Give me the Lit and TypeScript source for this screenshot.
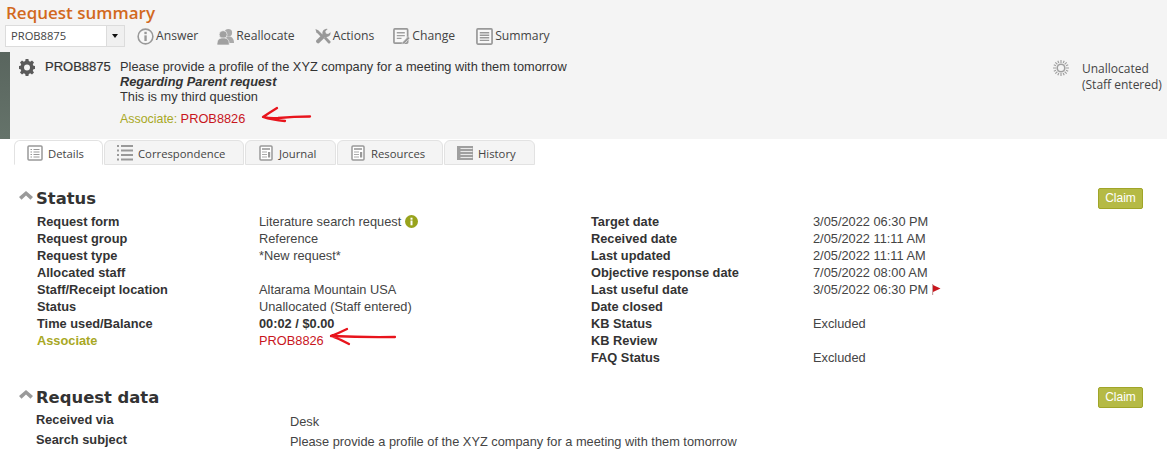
import { LitElement, html, css, svg } from "lit";
import { customElement } from "lit/decorators.js";

const ic = (body: unknown, w = 17, h = 17, vb = "0 0 18 18") =>
  html`<svg class="ic" width=${w} height=${h} viewBox=${vb}>${body}</svg>`;

const infoIcon = ic(svg`<circle cx="9" cy="9" r="7.800" fill="#f8f8f8" stroke="#999" stroke-width="1.700"/><rect x="7.800" y="7.800" width="2.500" height="6" fill="#999"/><rect x="7.800" y="4" width="2.500" height="2.500" fill="#999"/>`);
const peopleIcon = ic(svg`<circle cx="12" cy="5" r="4" fill="#aaa"/><path d="M8 16c0-5 1.500-7 4.500-7S18 11 18 16z" fill="#aaa"/><circle cx="6.500" cy="7" r="4.200" fill="#a0a0a0" stroke="#f4f4f4" stroke-width=".7"/><path d="M0 18c0-5.500 2-7.500 6.500-7.500S13 12.500 13 18z" fill="#a0a0a0" stroke="#f4f4f4" stroke-width=".7"/>`);
const wrenchIcon = ic(svg`<path d="M1.500 1l3 1.500 5 5-2 2-5-5z" fill="#999"/><path d="M17.500 4.500a4.500 4.500 0 0 1-5.500 5L5.500 16c-1.300 1.500-4.500-1.300-3-3L9 6.500A4.500 4.500 0 0 1 14.500 1L12 3.500l.6 2.300 2.300.6z" fill="#999"/><path d="M10.500 11l2-2 4.800 5c1 1.200-1 3.200-2.200 2.200z" fill="#999"/>`);
const changeIcon = ic(svg`<rect x="1" y="1" width="14.500" height="15" rx="1" fill="#f8f8f8" stroke="#999" stroke-width="1.800"/><path d="M4 5h8.500M4 8h8.500M4 11h5" stroke="#a0a0a0" stroke-width="1.400"/><path d="M10 15l6-6 1.800 1.800-6 6-2.400.5z" fill="#999" stroke="#f4f4f4" stroke-width=".5"/>`);
const summaryIcon = ic(svg`<rect x="1" y="1" width="16" height="16" rx="1" fill="#f8f8f8" stroke="#999" stroke-width="1.800"/><path d="M4 5h10M4 7.700h10M4 10.400h10M4 13.100h10" stroke="#999" stroke-width="1.500"/>`);
const detailsIcon = ic(svg`<rect x="1" y="1" width="14" height="14" rx="1" fill="#fff" stroke="#999" stroke-width="1.500"/><path d="M3.500 4.500h1.500M3.500 7h1.500M3.500 9.500h1.500M3.500 12h1.500M6.500 4.500h6M6.500 7h6M6.500 9.500h6M6.500 12h6" stroke="#999" stroke-width="1.200"/>`, 16, 16, "0 0 16 16");
const listIcon = ic(svg`<path d="M0 2h2M0 6.500h2M0 11h2M0 15.500h2M4 2h12M4 6.500h12M4 11h12M4 15.500h12" stroke="#999" stroke-width="1.800"/>`, 16, 17, "0 0 16 17");
const journalIcon = ic(svg`<rect x="1" y="1" width="12" height="14" rx="1" fill="#fff" stroke="#999" stroke-width="1.500"/><path d="M3 4h8" stroke="#999" stroke-width="1.600"/><path d="M3 7h5M3 9.500h5M3 12h5" stroke="#aaa" stroke-width="1.100"/><rect x="9" y="7" width="2.200" height="5.500" fill="#999"/>`, 14, 16, "0 0 14 16");
const historyIcon = ic(svg`<rect x="0" y="1" width="16" height="14" fill="#9f9f9f"/><path d="M3.500 3.500h12M3.500 6.500h12M3.500 9.500h12M3.500 12.500h12" stroke="#e8e8e8" stroke-width="1"/>`, 16, 16, "0 0 16 16");
const gearIcon = ic(svg`<path fill="#5a5a5a" fill-rule="evenodd" d="M6.600 0h2.800l.4 2.100 1.400.6L13 1.500l2 2-1.200 1.800.6 1.400 2.100.4v2.800l-2.100.4-.6 1.400 1.200 1.800-2 2-1.800-1.200-1.400.6-.4 2.100H6.600l-.4-2.100-1.400-.6L3 15.500l-2-2 1.200-1.800-.6-1.400L-.500 9.900V7.100l2.100-.4.6-1.400L1 3.500l2-2 1.800 1.200 1.400-.6zM8 5.500a3 3 0 1 0 0 6 3 3 0 0 0 0-6z"/>`, 16, 17, "0 0 16 17");
const sunIcon = ic(svg`<circle cx="8" cy="8" r="3.800" fill="none" stroke="#a0a0a0" stroke-width="1.600"/><path d="M8 0v3M8 13v3M0 8h3M13 8h3M2.300 2.300l2.100 2.100M11.600 11.600l2.100 2.100M2.300 13.700l2.100-2.100M11.600 4.400l2.100-2.100M4.800 .8l1 2.200M10.200 13l1 2.200M.8 11.200l2.200-1M13 5.800l2.200-1M.8 4.800l2.200 1M13 10.200l2.200 1M4.800 15.200l1-2.200M10.200 3l1-2.200" stroke="#a0a0a0" stroke-width="1.200"/>`, 16, 16, "0 0 16 16");
const chevron = html`<svg class="chev" width="14" height="9" viewBox="0 0 14 9"><path d="M0 6L7 0l7 6-2.500 2.800L7 4.500 2.500 8.800z" fill="#9a9a9a"/></svg>`;
const infoGreen = html`<svg class="ig" width="13" height="13" viewBox="0 0 13 13"><circle cx="6.500" cy="6.500" r="6.500" fill="#98a31c"/><rect x="5.500" y="5.500" width="2" height="4.800" fill="#fff"/><rect x="5.500" y="2.700" width="2" height="2" fill="#fff"/></svg>`;
const flag = html`<svg class="flag" width="9" height="11" viewBox="0 0 9 11"><rect x="0" y="0" width="1.200" height="11" fill="#c9a0a0"/><path d="M1 1l7.500 3.500L1 8z" fill="#c8161d"/></svg>`;
const arrow1 = html`<svg class="arrow1" width="52" height="20" viewBox="0 0 52 20"><path d="M17 3Q9 8 3 12q9 3 22 4M4 12q5 1.500 14 1 16-1.500 32-1.500" fill="none" stroke="#e8141c" stroke-width="2.300" stroke-linecap="round" stroke-linejoin="round"/></svg>`;
const arrow2 = html`<svg class="arrow2" width="68" height="20" viewBox="0 0 68 20"><path d="M18 2Q10 6 2 9q9 3 18 8M2 9q32 1.500 64 1" fill="none" stroke="#e8141c" stroke-width="2.300" stroke-linecap="round" stroke-linejoin="round"/></svg>`;

@customElement("app-root")
export class AppRoot extends LitElement {
  static styles = css`
    :host { display: block; width: 1167px; height: 453px; overflow: hidden; background: #fff; font: 12.800px/17px "Liberation Sans", Arial, sans-serif; color: #333; position: relative; }
    .ic { display: block; flex: none; }
    .head { background: #f4f4f4; height: 139px; display: flex; flex-direction: column; }
    h1 { margin: 0; padding: 1px 0 0 6px; height: 23px; font: 600 17px/23px "Open Sans", sans-serif; color: #d2691e; }
    .tools { display: flex; align-items: center; height: 24px; padding: 0 0 0 5px; }
    .select { box-sizing: border-box; width: 120px; height: 22px; display: flex; border: 1px solid #dcdcdc; background: #fff; margin-right: 12px; }
    .select .v { flex: 1; padding-left: 5px; font: 11.200px/20px "Open Sans", sans-serif; color: #444; display: block; }
    .select .b { width: 17px; background: #f0f0f0; border-left: 1px solid #dcdcdc; position: relative; }
    .select .b::after { content: ""; position: absolute; left: 5px; top: 8px; border: 3.500px solid transparent; border-top: 4px solid #111; border-bottom: 0; }
    .tool { display: flex; align-items: center; gap: 2px; margin-right: 19px; font: 12.200px/18px "Open Sans", sans-serif; color: #444; white-space: nowrap; }
    .tool.c { margin-right: 21px; }
    .sum { flex: 1; display: flex; margin-top: 4px; background: #f4f4f4; min-height: 0; }
    .bar { width: 10px; background: linear-gradient(#59655e, #65736a); flex: none; }
    .gear { margin: 7px 0 0 9px; }
    .id { margin: 6px 0 0 10px; width: 75px; font-size: 13px; color: #333; -webkit-text-stroke: .2px #333; flex: none; line-height: 17px; }
    .msg { padding-top: 7px; line-height: 15px; flex: 1; color: #333; position: relative; }
    .msg b { font-style: italic; display: block; }
    .msg .assoc { margin-top: 7px; color: #a8a824; line-height: 15px; font-size: 12.400px; }
    .red { color: #c8161d; font-size: 12.800px; }
    .arrow1 { position: absolute; left: 140px; top: 53px; }
    .state { display: flex; width: 114px; flex: none; padding-top: 8px; }
    .state .t { margin-left: 13px; font: 12px/16px "Open Sans", sans-serif; color: #444; white-space: nowrap; padding-top: 1px; }
    .tabs { display: flex; padding: 0 0 0 14px; margin-top: 1px; height: 25px; background: #fff; gap: 0; }
    .tab { box-sizing: border-box; height: 25px; display: flex; align-items: center; gap: 5px; padding: 2px 0 0 12px; margin-right: 1px; border: 1px solid #e2e2e2; border-radius: 6px 6px 0 0; background: #f4f4f4; font: 11.300px/18px "Open Sans", sans-serif; color: #444; }
    .tab.j { padding-left: 13px; gap: 6px; }
    .tab.on { background: #fff; border-bottom-color: #fff; }
    .tab .ic { margin-top: -2px; }
    .st { padding: 0 0 0 19px; }
    .sh { display: flex; align-items: flex-start; height: 20px; }
    .chev { margin: 2px 3px 0 0; flex: none; }
    h2 { margin: 0; font: bold 16.400px/20px "DejaVu Sans", Verdana, sans-serif; color: #333; }
    .claim { box-sizing: border-box; margin: -1px 24px 0 auto; width: 45px; height: 21px; padding: 0; border: 1px solid #a0a528; border-radius: 2px; background: #b5ba45; color: #fff; font: 12px/19px "Liberation Sans", Arial, sans-serif; text-align: center; }
    .cols { display: grid; grid-template-columns: 222px 332px 222px 1fr; padding: 4px 0 0 37px; }
    .l { font-weight: bold; color: #333; line-height: 17px; height: 17px; white-space: nowrap; }
    .v { line-height: 17px; height: 17px; white-space: nowrap; display: flex; align-items: center; gap: 4px; color: #444; position: relative; }
    .v b { color: #333; }
    .l.ol { color: #a8a824; }
    .arrow2 { position: absolute; left: 70px; top: -5px; }
    .s2 { margin-top: 22px; }
    .s1 { margin-top: 24px; }
    .dl { display: grid; grid-template-columns: 254px 1fr; padding: 2px 0 0 36px; }
    .dl .l, .dl .v { height: 20px; line-height: 20px; }
    .dl .v { top: 2px; }
  `;

  render() {
    const rows: [string, unknown, string, unknown][] = [
      ["Request form", html`Literature search request ${infoGreen}`, "Target date", "3/05/2022 06:30 PM"],
      ["Request group", "Reference", "Received date", "2/05/2022 11:11 AM"],
      ["Request type", "*New request*", "Last updated", "2/05/2022 11:11 AM"],
      ["Allocated staff", "", "Objective response date", "7/05/2022 08:00 AM"],
      ["Staff/Receipt location", "Altarama Mountain USA", "Last useful date", html`3/05/2022 06:30 PM ${flag}`],
      ["Status", "Unallocated (Staff entered)", "Date closed", ""],
      ["Time used/Balance", html`<b>00:02 / $0.00</b>`, "KB Status", "Excluded"],
      ["Associate", html`<span class="red">PROB8826</span>${arrow2}`, "KB Review", ""],
      ["", "", "FAQ Status", "Excluded"],
    ];
    return html`
      <div class="head">
        <h1>Request summary</h1>
        <div class="tools">
          <div class="select"><span class="v">PROB8875</span><span class="b"></span></div>
          <div class="tool">${infoIcon}Answer</div>
          <div class="tool">${peopleIcon}Reallocate</div>
          <div class="tool">${wrenchIcon}Actions</div>
          <div class="tool c">${changeIcon}Change</div>
          <div class="tool">${summaryIcon}Summary</div>
        </div>
        <div class="sum">
          <div class="bar"></div>
          <div class="gear">${gearIcon}</div>
          <div class="id">PROB8875</div>
          <div class="msg">
            Please provide a profile of the XYZ company for a meeting with them tomorrow
            <b>Regarding Parent request</b>
            This is my third question
            <div class="assoc">Associate: <span class="red">PROB8826</span></div>
            ${arrow1}
          </div>
          <div class="state">${sunIcon}<div class="t">Unallocated<br />(Staff entered)</div></div>
        </div>
      </div>
      <div class="tabs">
        <div class="tab on" style="width:89px">${detailsIcon}Details</div>
        <div class="tab" style="width:140px">${listIcon}Correspondence</div>
        <div class="tab j" style="width:91px">${journalIcon}Journal</div>
        <div class="tab j" style="width:106px">${journalIcon}Resources</div>
        <div class="tab" style="width:91px">${historyIcon}History</div>
      </div>
      <div class="st s1">
        <div class="sh">${chevron}<h2>Status</h2><button class="claim">Claim</button></div>
      </div>
      <div class="cols">
        ${rows.map(([a, b, c, d], i) => html`
          <div class="l ${i === 7 ? "ol" : ""}">${a}</div><div class="v">${b}</div>
          <div class="l">${c}</div><div class="v">${d}</div>`)}
      </div>
      <div class="st s2">
        <div class="sh">${chevron}<h2>Request data</h2><button class="claim">Claim</button></div>
      </div>
      <div class="dl">
        <div class="l">Received via</div><div class="v">Desk</div>
        <div class="l">Search subject</div><div class="v">Please provide a profile of the XYZ company for a meeting with them tomorrow</div>
      </div>
    `;
  }
}
